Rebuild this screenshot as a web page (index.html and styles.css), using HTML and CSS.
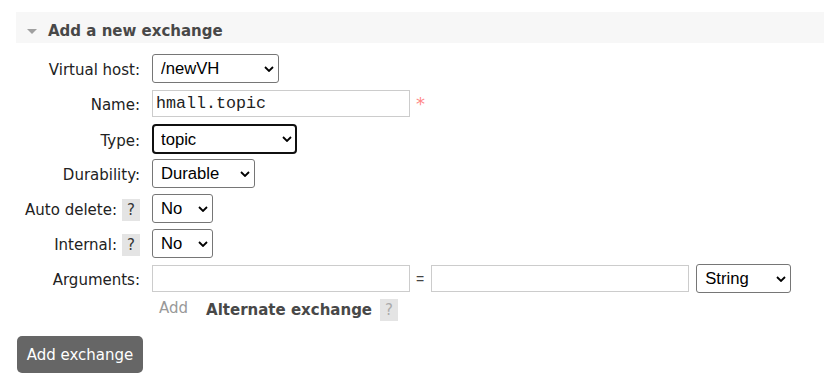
FILE: index.html
```html
<!DOCTYPE html>
<html lang="en">
<head>
  <meta charset="UTF-8" />
  <meta name="viewport" content="width=device-width, initial-scale=1.0" />
  <title>Add a new exchange</title>
  <link rel="stylesheet" href="styles.css">
</head>
<body>

  <div class="section">
    <h2 class="section-title"><span class="toggle"></span>Add a new exchange</h2>

    <form class="exchange-form">
      <!-- Virtual host -->
      <div class="form-row">
        <label class="form-label">Virtual host:</label>
        <div class="form-field">
          <select class="ctl w-vhost">
            <option>/newVH</option>
            <option>/</option>
          </select>
        </div>
      </div>

      <div class="form-row">
        <label class="form-label">Name:</label>
        <div class="form-field">
          <input class="txt" type="text" value="hmall.topic">
          <span class="mand">*</span>
        </div>
      </div>

      <div class="form-row">
        <label class="form-label">Type:</label>
        <div class="form-field">
          <select class="ctl w-type focused">
            <option>topic</option>
            <option>direct</option>
            <option>fanout</option>
            <option>headers</option>
          </select>
        </div>
      </div>

      <div class="form-row">
        <label class="form-label">Durability:</label>
        <div class="form-field">
          <select class="ctl w-durable">
            <option>Durable</option>
            <option>Transient</option>
          </select>
        </div>
      </div>

      <div class="form-row">
        <label class="form-label">Auto delete: <span class="help">?</span></label>
        <div class="form-field">
          <select class="ctl w-yesno">
            <option>No</option>
            <option>Yes</option>
          </select>
        </div>
      </div>

      <div class="form-row">
        <label class="form-label">Internal: <span class="help">?</span></label>
        <div class="form-field">
          <select class="ctl w-yesno">
            <option>No</option>
            <option>Yes</option>
          </select>
        </div>
      </div>

      <div class="form-row">
        <label class="form-label">Arguments:</label>
        <div class="form-field">
          <input class="txt" type="text">
          <span class="equals">=</span>
          <input class="txt" type="text">
          <select class="ctl w-string">
            <option>String</option>
            <option>Number</option>
            <option>Boolean</option>
            <option>List</option>
          </select>
        </div>
      </div>

      <!-- Atajos de argumentos -->
      <div class="arg-shortcuts">
        <span class="add-link">Add</span>
        <span class="shortcut">Alternate exchange</span>
        <span class="help light">?</span>
      </div>

      <button type="button" class="btn">Add exchange</button>
    </form>
  </div>

</body>
</html>
```

FILE: styles.css
```css
body {
  margin: 0;
  font-family: Verdana, 'DejaVu Sans', sans-serif;
  font-size: 15px;
  color: #222;
  background-color: #fff;
}

.section {
  padding: 12px 0 0 16px;
}

.section-title {
  display: flex;
  align-items: center;
  gap: 11px;
  margin: 0;
  height: 18px;
  padding: 10px 11px 3px;
  background-color: #f7f7f7;
  font-size: 15px;
  line-height: 18px;
  color: #484848;
}

.toggle {
  width: 0;
  height: 0;
  border-left: 5.5px solid transparent;
  border-right: 5.5px solid transparent;
  border-top: 5px solid #a0a0a0;
}

.exchange-form {
  margin-top: 11px;
}

.form-row {
  display: grid;
  grid-template-columns: 124px 1fr;
  column-gap: 12px;
  align-items: center;
  height: 29px;
  margin-bottom: 6px;
}

.form-label {
  display: flex;
  justify-content: flex-end;
  align-items: center;
  gap: 5px;
  padding-top: 3px;
  line-height: 18px;
  white-space: nowrap;
}

.form-field {
  display: flex;
  align-items: center;
}

.ctl {
  -webkit-appearance: none;
  appearance: none;
  height: 29px;
  box-sizing: border-box;
  font-family: 'Liberation Sans', Arial, sans-serif;
  font-size: 16.67px;
  color: #000;
  border: 1px solid #767676;
  border-radius: 3px;
  padding: 0 16px 0 8px;
  background: #fff url("data:image/svg+xml,%3Csvg xmlns='http://www.w3.org/2000/svg' width='10' height='6' viewBox='0 0 10 6'%3E%3Cpath d='M1 1l4 4 4-4' fill='none' stroke='%23000' stroke-width='1.8'/%3E%3C/svg%3E") no-repeat right 4px center / 10px 6px;
}

.ctl.focused {
  height: 30px;
  border: 2px solid #101010;
  border-radius: 4px;
  outline: none;
  padding-left: 7px;
  background-position: right 3px center;
}

.w-vhost { width: 127px; }
.w-type { width: 145px; }
.w-durable { width: 103px; }
.w-yesno { width: 61px; }
.w-string { width: 95px; margin-left: 7px; }

.txt {
  width: 258px;
  height: 27px;
  box-sizing: border-box;
  border: 1px solid #ccc;
  padding: 0 3px;
  font-family: 'Liberation Mono', 'Courier New', monospace;
  font-size: 16.67px;
  color: #222;
  outline: none;
}

.mand {
  color: #f88;
  font-size: 18px;
  line-height: 18px;
  margin-left: 6px;
  align-self: flex-start;
  margin-top: 5px;
}

.equals {
  font-family: 'Liberation Sans', Arial, sans-serif;
  font-size: 14px;
  color: #444;
  margin: 0 7px 0 6px;
}

.help {
  display: inline-flex;
  justify-content: center;
  align-items: center;
  width: 18px;
  height: 22px;
  background-color: #e4e4e4;
  color: #333;
  font-size: 15px;
}

.help.light {
  color: #aaa;
  margin-left: 8px;
}

.arg-shortcuts {
  display: flex;
  align-items: center;
  height: 22px;
  margin: 2px 0 0 143px;
}

.add-link {
  color: #999;
  padding-bottom: 4px;
}

.shortcut {
  font-weight: bold;
  color: #484848;
  margin-left: 18px;
}

.btn {
  display: block;
  margin: 15px 0 0 1px;
  width: 126px;
  height: 37px;
  padding: 0;
  border: none;
  border-radius: 5px;
  background-color: #666;
  color: #fff;
  font-family: Verdana, 'DejaVu Sans', sans-serif;
  font-size: 15px;
  cursor: pointer;
}
```
